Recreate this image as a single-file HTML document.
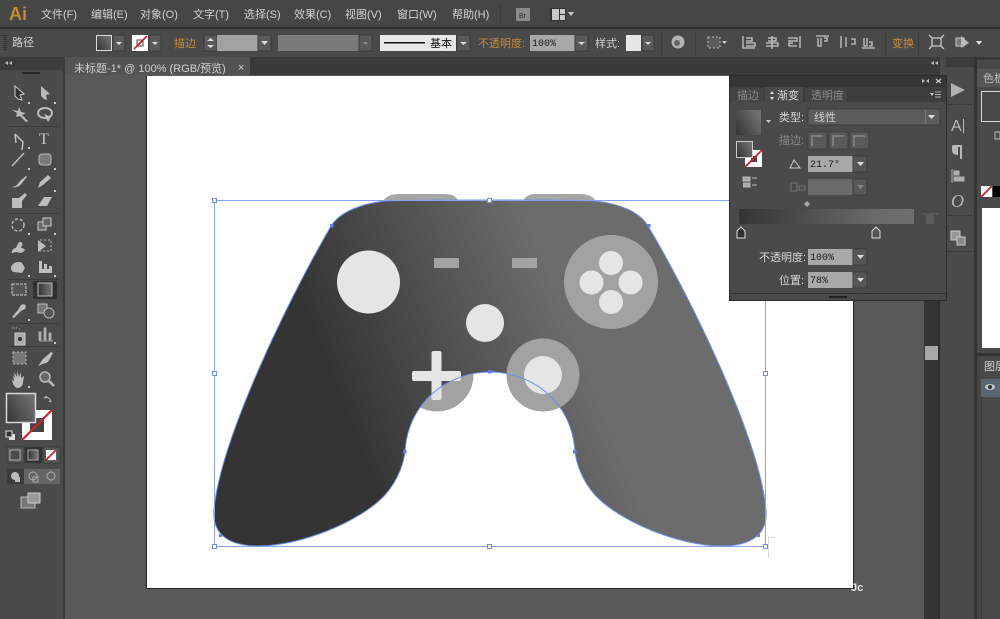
<!DOCTYPE html>
<html><head><meta charset="utf-8"><style>
html,body{margin:0;padding:0;background:#595959;width:1000px;height:619px;overflow:hidden}
svg{display:block;filter:blur(.35px)}
text{font-family:"Liberation Sans","Noto Sans CJK SC",sans-serif;font-size:11px;fill:#d2d2d2}
.m{font-family:"Liberation Mono","Noto Sans CJK SC",monospace;fill:#1c1c1c;font-size:10px}
.o{fill:#c98a3a}
.i{fill:none;stroke:#c8c8c8;stroke-width:1.3}
.f{fill:#bdbdbd}
</style></head><body>
<svg width="1000" height="619" viewBox="0 0 1000 619" xmlns="http://www.w3.org/2000/svg">
<defs>
<linearGradient id="g" gradientUnits="userSpaceOnUse" x1="300" y1="300" x2="525" y2="211"><stop offset="0" stop-color="#343434"/><stop offset="1" stop-color="#6c6c6c"/></linearGradient>
<linearGradient id="s" x1="0" y1="1" x2="1" y2="0.4"><stop offset="0" stop-color="#343434"/><stop offset="1" stop-color="#6e6e6e"/></linearGradient>
<linearGradient id="b" x1="0" x2="1"><stop offset="0" stop-color="#343434"/><stop offset=".78" stop-color="#6a6a6a"/><stop offset="1" stop-color="#6e6e6e"/></linearGradient>
</defs>
<!-- base -->
<rect width="1000" height="619" fill="#595959"/>
<rect width="1000" height="27" fill="#464646"/>
<rect y="27" width="1000" height="2" fill="#303030"/>
<rect y="29" width="1000" height="28" fill="#494949"/>
<rect y="57" width="1000" height="19" fill="#3a3a3a"/>
<rect x="0" y="60" width="64" height="559" fill="#4a4a4a"/>
<rect x="0" y="60" width="64" height="10" fill="#3c3c3c"/>
<rect x="63" y="60" width="2" height="559" fill="#3a3a3a"/>
<rect x="65" y="57" width="185" height="19" fill="#535353"/>
<rect x="65" y="75" width="860" height="544" fill="#595959"/>
<!-- artboard -->
<rect x="146" y="76" width="708" height="513" fill="#222"/>
<rect x="147" y="76" width="706" height="512" fill="#fff"/>
<!-- menu -->
<text x="9" y="20" style="font-size:18px;font-weight:bold;fill:#c98a2e">Ai</text>
<text x="41" y="18">文件(F)</text><text x="91" y="18">编辑(E)</text><text x="140" y="18">对象(O)</text><text x="193" y="18">文字(T)</text><text x="244" y="18">选择(S)</text><text x="294" y="18">效果(C)</text><text x="345" y="18">视图(V)</text><text x="397" y="18">窗口(W)</text><text x="452" y="18">帮助(H)</text>
<rect x="500" y="4" width="1" height="20" fill="#3a3a3a"/>
<rect x="516" y="8" width="14" height="13" fill="#8a8a8a"/><text x="519" y="18" style="font-size:7px;fill:#333">Br</text>
<rect x="550" y="8" width="16" height="13" fill="#333"/><rect x="552" y="9" width="7" height="11" fill="#c8c8c8"/><rect x="560" y="9" width="5" height="5" fill="#c8c8c8"/><rect x="560" y="15" width="5" height="5" fill="#c8c8c8"/>
<path d="M568 12h6l-3 4z" fill="#ccc"/>
<!-- control bar -->
<path d="M5 35v15" stroke="#2e2e2e" stroke-width="3" stroke-dasharray="1 1"/>
<text x="12" y="46">路径</text>
<rect x="96" y="35" width="16" height="16" fill="#ddd"/><rect x="97" y="36" width="14" height="14" fill="url(#s)"/>
<rect x="113" y="35" width="12" height="16" fill="#5a5a5a" stroke="#3a3a3a"/><path d="M116 42h6l-3 3z" fill="#ddd"/>
<rect x="132" y="35" width="16" height="16" fill="#fff"/><rect x="137" y="40" width="6" height="6" fill="none" stroke="#444"/><path d="M134 49L147 36" stroke="#d0202a" stroke-width="1.800"/>
<rect x="149" y="35" width="12" height="16" fill="#5a5a5a" stroke="#3a3a3a"/><path d="M152 42h6l-3 3z" fill="#ddd"/>
<text class="o" x="174" y="47">描边</text>
<rect x="204" y="35" width="13" height="16" fill="#5a5a5a" stroke="#3a3a3a"/><path d="M207 41l3.500-3 3.500 3zM207 45l3.500 3 3.500-3z" fill="#ddd"/>
<rect x="217" y="35" width="41" height="16" fill="#a2a2a2"/>
<rect x="258" y="35" width="13" height="16" fill="#5a5a5a" stroke="#3a3a3a"/><path d="M261 41h7l-3.500 4z" fill="#ddd"/>
<rect x="278" y="35" width="81" height="16" fill="#7a7a7a"/>
<rect x="359" y="35" width="13" height="16" fill="#5a5a5a" stroke="#3a3a3a"/><path d="M363 42h5l-2.500 3z" fill="#888"/>
<rect x="380" y="35" width="76" height="16" fill="#e8e8e8"/><rect x="384" y="42" width="41" height="1.500" fill="#111"/><text x="430" y="47" style="fill:#111">基本</text>
<rect x="457" y="35" width="13" height="16" fill="#5a5a5a" stroke="#3a3a3a"/><path d="M460 42h7l-3.500 3z" fill="#ddd"/>
<text class="o" x="478" y="47">不透明度:</text>
<rect x="530" y="35" width="45" height="16" fill="#a8a8a8"/><text class="m" x="532" y="46">100%</text>
<rect x="575" y="35" width="13" height="16" fill="#5a5a5a" stroke="#3a3a3a"/><path d="M578 42h7l-3.500 3z" fill="#ddd"/>
<text x="595" y="47">样式:</text>
<rect x="626" y="35" width="15" height="16" fill="#e6e6e6"/>
<rect x="642" y="35" width="12" height="16" fill="#5a5a5a" stroke="#3a3a3a"/><path d="M645 42h6l-3 3z" fill="#ddd"/>
<rect x="661" y="31" width="1" height="24" fill="#3c3c3c"/><rect x="695" y="31" width="1" height="24" fill="#3c3c3c"/><rect x="885" y="31" width="1" height="24" fill="#3c3c3c"/><rect x="918" y="31" width="1" height="24" fill="#3c3c3c"/>
<circle cx="678" cy="42" r="6.500" fill="#b4b4b4"/><circle cx="677" cy="43" r="3" fill="#666"/>
<rect x="708" y="37" width="12" height="11" fill="#5a5a5a" stroke="#bbb" stroke-dasharray="2 2"/><path d="M722 41h5l-2.500 3z" fill="#ccc"/>
<g class="i"><path d="M743 36v12h12M746 38h6v3h-6M746 43h9v3h-9M772 36v13M768 38h8v3h-8M766 43h12v3h-12M800 36v12M788 38h9v3h-9M793 43h-4v3h8M816 36h13M818 38v8h3v-8M824 38h3v3h-3M841 36v12M846 37v10M851 39h4v5h-4M862 48h13M864 38v8h3v-8M869 42h3v4h-3"/></g>
<text class="o" x="892" y="47">变换</text>
<g class="i"><rect x="932" y="38" width="9" height="8"/><path d="M929 35l3 3M944 35l-3 3M929 49l3-3M944 49l-3-3"/></g>
<rect x="956" y="38" width="8" height="8" fill="#777" stroke="#ccc"/><path d="M961 36l8 7-8 5z" fill="#bbb"/><path d="M976 41h6l-3 4z" fill="#ddd"/>
<!-- doc tab -->
<text x="74" y="72" style="fill:#cfcfcf">未标题-1* @ 100% (RGB/预览)</text>
<text x="238" y="71" style="fill:#ccc">×</text>
<path d="M5 63l3-2v4zM9 63l3-2v4z" fill="#bbb"/>
<path d="M931 63l3-2v4zM935 63l3-2v4z" fill="#bbb"/>
<!-- controller -->
<path d="M383 201C388 194 395 194 402 194H442C450 194 456 195 458 201ZM523 201C526 195 530 194 538 194H578C586 194 592 195 596 201Z" fill="#a6a6a6"/>
<circle cx="437" cy="375" r="36.500" fill="#a2a2a2"/>
<path d="M490 200C430 200 400 200 385 201C360 204 340 212 331 226C288 300 220 440 214 510C212 535 230 546 258 546C300 546 360 522 385 495C400 478 404 460 405 452C408 400 450 372 490 372C530 372 572 400 575 452C576 460 580 478 595 495C620 522 680 546 722 546C750 546 768 535 766 510C760 440 692 300 648 226C640 212 620 204 595 201C580 200 550 200 490 200Z" fill="url(#g)"/>
<circle cx="368.500" cy="282" r="31.500" fill="#e5e5e5"/>
<rect x="434" y="258" width="25" height="10" fill="#a3a3a3"/><rect x="512" y="258" width="25" height="10" fill="#a3a3a3"/>
<circle cx="611" cy="282" r="47" fill="#a2a2a2"/>
<circle cx="611" cy="263" r="12" fill="#e5e5e5"/><circle cx="591.500" cy="282.500" r="12" fill="#e5e5e5"/><circle cx="630.500" cy="282.500" r="12" fill="#e5e5e5"/><circle cx="611" cy="302" r="12" fill="#e5e5e5"/>
<circle cx="485" cy="323" r="19" fill="#e5e5e5"/>
<circle cx="543" cy="375" r="36.500" fill="#a2a2a2"/>
<circle cx="543" cy="375" r="19" fill="#e5e5e5"/>
<rect x="412" y="371" width="49" height="10" rx="2" fill="#e5e5e5"/><rect x="431.500" y="351" width="10" height="49" rx="2" fill="#e5e5e5"/>
<!-- selection -->
<path d="M490 200C430 200 400 200 385 201C360 204 340 212 331 226C288 300 220 440 214 510C212 535 230 546 258 546C300 546 360 522 385 495C400 478 404 460 405 452C408 400 450 372 490 372C530 372 572 400 575 452C576 460 580 478 595 495C620 522 680 546 722 546C750 546 768 535 766 510C760 440 692 300 648 226C640 212 620 204 595 201C580 200 550 200 490 200Z" fill="none" stroke="#6f8ee8" stroke-width="1"/>
<rect x="214.500" y="200.500" width="551" height="346" fill="none" stroke="#86a2f0" stroke-width="1"/>
<g fill="#fff" stroke="#6f8ee8"><rect x="212.500" y="198.500" width="4" height="4"/><rect x="487.500" y="198.500" width="4" height="4"/><rect x="763.500" y="198.500" width="4" height="4"/><rect x="212.500" y="371.500" width="4" height="4"/><rect x="763.500" y="371.500" width="4" height="4"/><rect x="212.500" y="544.500" width="4" height="4"/><rect x="487.500" y="544.500" width="4" height="4"/><rect x="763.500" y="544.500" width="4" height="4"/></g>
<g fill="#5b7fe8"><rect x="330" y="224" width="3.500" height="3.500"/><rect x="647" y="224" width="3.500" height="3.500"/><rect x="488" y="370" width="3.500" height="3.500"/><rect x="403" y="450" width="3.500" height="3.500"/><rect x="573" y="450" width="3.500" height="3.500"/><rect x="219" y="534" width="3" height="3"/><rect x="757" y="534" width="3" height="3"/></g>
<path d="M768.500 558V537.500H775" fill="none" stroke="#ddd"/>
<text x="851" y="591" style="font-size:11px;font-weight:bold;fill:#e6e6e6">Jc</text>
<!-- scrollbar and right docks -->
<rect x="924" y="76" width="16" height="543" fill="#343434"/><rect x="938" y="76" width="2" height="543" fill="#2e2e2e"/>
<rect x="925" y="346" width="13" height="14" fill="#a8a8a8"/>
<rect x="940" y="57" width="35" height="562" fill="#4a4a4a"/>
<rect x="976" y="60" width="24" height="559" fill="#494949"/>
<rect x="974" y="57" width="3" height="562" fill="#333"/>
<rect x="946" y="57" width="28" height="10" fill="#3c3c3c"/>
<rect x="946" y="104" width="26" height="1" fill="#3a3a3a"/><rect x="946" y="215" width="26" height="1" fill="#3a3a3a"/><rect x="946" y="251" width="26" height="1" fill="#3a3a3a"/>
<path d="M951 83l14 7-14 7z" fill="#b0b0b0"/>
<text x="951" y="131" style="font-size:16px;fill:#b8b8b8">A</text><rect x="963" y="119" width="1" height="14" fill="#b8b8b8"/>
<path d="M953 145h9v14h-2v-12h-2v8c-4 0-6-2-6-5s0-5 1-5z" fill="#b8b8b8"/>
<path d="M952 169v14M954 171h5v4h-5zM954 177h10v4h-10z" fill="#b0b0b0" stroke="#b0b0b0"/>
<text x="951" y="207" style="font-size:18px;font-style:italic;font-family:'Liberation Serif',serif;fill:#b8b8b8">O</text>
<rect x="951" y="231" width="9" height="9" fill="#999" stroke="#ccc"/><rect x="957" y="237" width="8" height="8" fill="#888" stroke="#ccc"/>
<rect x="977" y="69" width="23" height="18" fill="#555"/><text x="983" y="82" style="fill:#bbb">色板</text>
<rect x="981.500" y="91.500" width="20" height="30" fill="#484848" stroke="#ddd"/>
<path d="M995 132h5v7h-5z" fill="none" stroke="#bbb"/>
<rect x="981" y="186" width="11" height="11" fill="#fff"/><path d="M981 197l11-11" stroke="#d0202a" stroke-width="1.800"/><rect x="993" y="186" width="7" height="11" fill="#000"/>
<rect x="982" y="208" width="18" height="140" fill="#fff"/>
<rect x="975" y="353" width="25" height="3" fill="#333"/>
<text x="984" y="370">图层</text>
<rect x="981" y="379" width="19" height="18" fill="#5c6672"/><ellipse cx="990" cy="387" rx="5" ry="3" fill="#c4c4c4"/><circle cx="990" cy="387" r="2" fill="#333"/>
<rect x="977" y="356" width="3" height="263" fill="#444"/><rect x="981" y="397" width="1" height="222" fill="#3a3a3a"/>
<!-- gradient panel -->
<rect x="729" y="75" width="218" height="226" fill="#2c2c2c"/>
<rect x="730" y="76" width="216" height="224" fill="#4a4a4a"/>
<rect x="730" y="76" width="216" height="11" fill="#353535"/>
<rect x="730" y="87" width="216" height="15" fill="#3d3d3d"/>
<rect x="765" y="87" width="38" height="15" fill="#4a4a4a"/><rect x="730" y="88" width="34" height="14" fill="#444"/><rect x="805" y="88" width="42" height="14" fill="#444"/>
<path d="M922 79l3 2-3 2zM926 81l3-2v4z" fill="#bbb"/>
<path d="M936 79l5 4M941 79l-5 4" stroke="#ccc" stroke-width="1.200"/>
<text x="737" y="99" style="fill:#8a8a8a">描边</text>
<path d="M770 94l2-3 2 3zM770 97l2 3 2-3z" fill="#ddd"/>
<text x="777" y="99" style="fill:#ddd">渐变</text>
<text x="811" y="99" style="fill:#8a8a8a">透明度</text>
<path d="M930 93h4l-2 3z" fill="#ccc"/><path d="M935 92h6M935 94.500h6M935 97h6" stroke="#aaa"/>
<rect x="736" y="110" width="25" height="25" fill="url(#s)"/>
<path d="M766 120h5l-2.500 3z" fill="#ccc"/>
<text x="779" y="121" style="fill:#d6d6d6">类型:</text>
<rect x="808" y="109" width="132" height="16" fill="#5c5c5c" stroke="#3c3c3c"/>
<text x="814" y="121">线性</text><rect x="925" y="110" width="1" height="14" fill="#777"/>
<path d="M928 115h7l-3.500 4z" fill="#ddd"/>
<rect x="745" y="150" width="17" height="17" fill="#fff"/><rect x="751" y="156" width="6" height="6" fill="#444"/><path d="M745 167l17-17" stroke="#d0202a" stroke-width="1.800"/>
<rect x="736.500" y="141.500" width="16" height="16" fill="url(#s)" stroke="#ccc"/>
<path d="M743 177h7v4h-7zM743 183h7v4h-7M752 178h5M752 185h5" fill="#aaa" stroke="#bbb"/>
<text x="779" y="144" style="fill:#888">描边:</text>
<rect x="808" y="132" width="19" height="17" fill="#5a5a5a" stroke="#404040"/><rect x="829" y="132" width="19" height="17" fill="#5a5a5a" stroke="#404040"/><rect x="850" y="132" width="19" height="17" fill="#5a5a5a" stroke="#404040"/>
<path d="M812 146v-10h11M833 146v-10h11M854 146v-10h11" fill="none" stroke="#888" stroke-width="1.500"/>
<path d="M790 168h10l-6-8z" fill="none" stroke="#ccc"/>
<rect x="808" y="156" width="45" height="16" fill="#a8a8a8"/><text class="m" x="810" y="167">21.7°</text>
<rect x="853" y="156" width="14" height="16" fill="#565656" stroke="#3c3c3c"/><path d="M857 162h7l-3.500 4z" fill="#ddd"/>
<path d="M791 183h6v8h-6zM799 186h6v4h-6z" fill="none" stroke="#777"/>
<rect x="808" y="179" width="45" height="16" fill="#6a6a6a"/>
<rect x="853" y="179" width="14" height="16" fill="#585858" stroke="#3c3c3c"/><path d="M857 185h7l-3.500 4z" fill="#888"/>
<path d="M807 201l3 3-3 3-3-3z" fill="#aaa"/>
<rect x="739" y="209" width="175" height="15" fill="url(#b)"/>
<path d="M922 214h16" stroke="#666"/><path d="M926 215h8v9h-8z" fill="#5c5c5c"/>
<path d="M737 231l4-4 4 4v7h-8z" fill="#333" stroke="#ddd"/><path d="M872 231l4-4 4 4v7h-8z" fill="#555" stroke="#ddd"/>
<text x="759" y="261" style="fill:#d6d6d6">不透明度:</text>
<rect x="808" y="249" width="45" height="16" fill="#a8a8a8"/><text class="m" x="810" y="260">100%</text>
<rect x="853" y="249" width="14" height="16" fill="#565656" stroke="#3c3c3c"/><path d="M857 255h7l-3.500 4z" fill="#ddd"/>
<text x="779" y="284" style="fill:#d6d6d6">位置:</text>
<rect x="808" y="272" width="45" height="16" fill="#a8a8a8"/><text class="m" x="810" y="283">78%</text>
<rect x="853" y="272" width="14" height="16" fill="#565656" stroke="#3c3c3c"/><path d="M857 278h7l-3.500 4z" fill="#ddd"/>
<rect x="730" y="293" width="216" height="1" fill="#333"/>
<rect x="829" y="296" width="18" height="2" fill="#222"/>
<!-- left toolbar -->
<rect x="22" y="72" width="18" height="2" fill="#262626"/>
<g fill="#3a3a3a"><rect x="8" y="126" width="50" height="1"/><rect x="8" y="213" width="50" height="1"/><rect x="8" y="279" width="50" height="1"/><rect x="8" y="323" width="50" height="1"/><rect x="8" y="346" width="50" height="1"/></g>
<rect x="33" y="281" width="24" height="18" fill="#303030"/>
<!-- tools row by row -->
<path d="M15 86l9 8-4 1 2 5-4-1-3-3z" fill="#333" stroke="#ccc"/>
<path d="M41 86l9 8-4 1 1 5-3-1-3-3z" fill="#bbb"/>
<path d="M12 110l6 1 1-4 2 5 5 1-4 2 6 6-2 1-6-6-4 1 1-4z" class="f"/>
<ellipse cx="45" cy="113" rx="7" ry="5" fill="none" stroke="#bbb" stroke-width="2"/><path d="M44 114l7 3-3 5z" class="f"/>
<path d="M15 134l8 8-1 8M15 134l1 9" fill="none" stroke="#c4c4c4" stroke-width="1.400"/>
<text x="39" y="144" style="font-size:16px;font-family:'Liberation Serif',serif;fill:#c8c8c8">T</text>
<path d="M12 166l12-13" stroke="#bbb" stroke-width="1.500"/>
<rect x="39" y="154" width="12" height="11" rx="3" fill="#7a7a7a" stroke="#bbb"/>
<path d="M11 187c5 0 6-2 9-6l6-5 1 1-5 6c-3 4-6 5-11 4z" class="f"/>
<path d="M38 188l2-6 8-7 3 3-8 7z" class="f"/>
<path d="M12 198h7l6-5 2 2-5 6v7H12z" class="f"/>
<path d="M38 206l6-9h8l-5 9z" class="f"/>
<circle cx="18" cy="225" r="6" fill="none" stroke="#bbb" stroke-width="1.500" stroke-dasharray="3 2"/>
<rect x="38" y="222" width="8" height="8" fill="#666" stroke="#ccc"/><rect x="43" y="218" width="8" height="8" fill="#666" stroke="#ccc"/>
<path d="M12 251c2-4 4-2 5-5s3-6 5-3-3 4 0 5 4 2 1 4-5 0-7 0-5 3-4-1z" class="f"/>
<rect x="40" y="240" width="11" height="11" fill="none" stroke="#bbb" stroke-dasharray="2 2"/><path d="M38 240l8 6-8 6z" class="f"/>
<path d="M11 267c2-5 8-6 11-4l3 5-3 5-8-1c-3-1-3-3-3-5z" class="f"/>
<path d="M39 273v-12h3v8h2v-5h3v5h2v-3h3v7z" class="f"/>
<rect x="12" y="284" width="14" height="11" fill="#555" stroke="#ccc" stroke-dasharray="3 1"/>
<rect x="38" y="283" width="14" height="13" fill="url(#b)" stroke="#bbb"/>
<path d="M12 317l6-7 3-5 3-1 2 2-1 3-4 2-7 7z" class="f"/>
<rect x="38" y="304" width="9" height="9" fill="#777" stroke="#bbb"/><circle cx="49" cy="313" r="5" fill="#555" stroke="#bbb"/>
<rect x="15" y="333" width="10" height="12" fill="#aaa" stroke="#ccc"/><circle cx="20" cy="339" r="2" fill="#333"/><path d="M12 328h5M19 329h2" stroke="#aaa" stroke-dasharray="1 1"/>
<path d="M39 340v-8h2v8zM44 340v-12h2v12zM49 340v-7h2v7zM39 341h14" fill="#aaa" stroke="#bbb" stroke-width=".7"/>
<rect x="13" y="352" width="13" height="12" fill="#777" stroke="#bbb" stroke-dasharray="2 2"/>
<path d="M38 366l5-7 8-7 2 1-5 9z" class="f"/>
<path d="M12 380l2 1-1-6 2 3-1-6 3 5 0-6 2 6 2-5 0 6 3-2-1 6c0 4-3 6-5 6-3 0-5-3-6-8z" class="f"/>
<circle cx="45" cy="377" r="5" fill="#666" stroke="#bbb" stroke-width="1.500"/><path d="M49 381l5 5" stroke="#bbb" stroke-width="2.500"/>
<g fill="#c8c8c8"><rect x="28" y="102" width="2" height="2"/><rect x="54" y="102" width="2" height="2"/><rect x="28" y="147" width="2" height="2"/><rect x="54" y="190" width="2" height="2"/><rect x="28" y="168" width="2" height="2"/><rect x="54" y="168" width="2" height="2"/><rect x="28" y="233" width="2" height="2"/><rect x="54" y="233" width="2" height="2"/><rect x="28" y="275" width="2" height="2"/><rect x="54" y="275" width="2" height="2"/><rect x="28" y="319" width="2" height="2"/><rect x="54" y="342" width="2" height="2"/><rect x="28" y="386" width="2" height="2"/></g>
<!-- fill / stroke -->
<rect x="22" y="410" width="30" height="30" fill="#fff"/><rect x="30" y="418" width="14" height="14" fill="#444"/><path d="M22 440l30-30" stroke="#d0202a" stroke-width="2"/>
<rect x="6.500" y="393.500" width="29" height="29" fill="url(#s)" stroke="#d8d8d8" stroke-width="1.500"/>
<path d="M44 398c4-1 6 0 7 4M44 398l3-2M51 402l-2-1" fill="none" stroke="#bbb"/>
<rect x="9" y="434" width="6" height="6" fill="#ddd"/><rect x="6" y="431" width="6" height="6" fill="#333" stroke="#ddd"/>
<rect x="7" y="447" width="17" height="16" fill="#585858" stroke="#3a3a3a"/><rect x="10" y="450" width="10" height="10" fill="#4a4a4a" stroke="#aaa"/>
<rect x="25" y="447" width="17" height="16" fill="#333"/><rect x="28" y="450" width="10" height="10" fill="url(#b)" stroke="#aaa"/>
<rect x="43" y="447" width="17" height="16" fill="#585858" stroke="#3a3a3a"/><rect x="46" y="450" width="10" height="10" fill="#fff"/><path d="M46 460l10-10" stroke="#d0202a" stroke-width="1.800"/>
<rect x="7" y="469" width="17" height="15" fill="#3c3c3c"/><rect x="24" y="469" width="18" height="15" fill="#656565"/><rect x="42" y="469" width="18" height="15" fill="#656565"/>
<circle cx="15" cy="476" r="4" fill="#bbb"/><rect x="15" y="477" width="5" height="5" fill="#bbb"/>
<circle cx="33" cy="476" r="4" fill="none" stroke="#aaa"/><rect x="33" y="477" width="5" height="5" fill="none" stroke="#aaa"/>
<circle cx="51" cy="476" r="4" fill="none" stroke="#aaa"/>
<rect x="21" y="497" width="14" height="11" fill="#777" stroke="#bbb"/><rect x="28" y="493" width="12" height="10" fill="#999" stroke="#ccc"/>
</svg>
</body></html>
